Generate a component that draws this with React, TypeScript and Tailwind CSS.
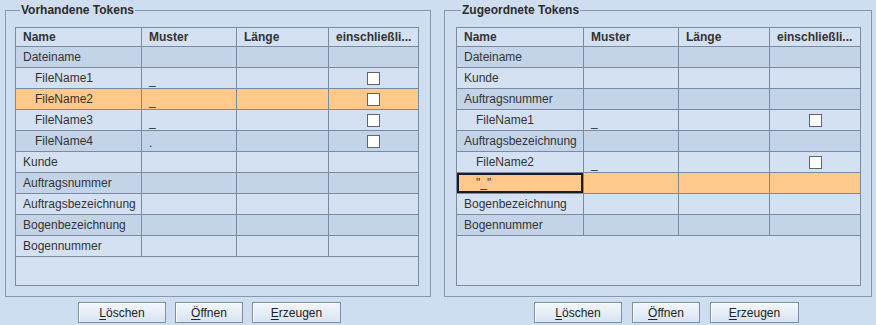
import React from "react";

type Row = {
  name: string;
  child?: boolean;
  muster?: string;
  check?: boolean;
  selected?: boolean;
  focus?: boolean;
};

const leftRows: Row[] = [
  { name: "Dateiname" },
  { name: "FileName1", child: true, muster: "_", check: true },
  { name: "FileName2", child: true, muster: "_", check: true, selected: true },
  { name: "FileName3", child: true, muster: "_", check: true },
  { name: "FileName4", child: true, muster: ".", check: true },
  { name: "Kunde" },
  { name: "Auftragsnummer" },
  { name: "Auftragsbezeichnung" },
  { name: "Bogenbezeichnung" },
  { name: "Bogennummer" },
];

const rightRows: Row[] = [
  { name: "Dateiname" },
  { name: "Kunde" },
  { name: "Auftragsnummer" },
  { name: "FileName1", child: true, muster: "_", check: true },
  { name: "Auftragsbezeichnung" },
  { name: "FileName2", child: true, muster: "_", check: true },
  { name: '"_"', child: true, selected: true, focus: true },
  { name: "Bogenbezeichnung" },
  { name: "Bogennummer" },
];

function Checkbox() {
  return <div className="w-[13px] h-[13px] bg-white border border-[#5b6573]" />;
}

function Table({ rows, widths }: { rows: Row[]; widths: number[] }) {
  const headers = ["Name", "Muster", "Länge", "einschließli..."];
  return (
    <div className="h-[259px] border border-[#7a8ba1] bg-[#d3e1f3] flex flex-col overflow-hidden">
      <div className="flex h-[19px] border-b border-[#7a8ba1] bg-[#d3e1f3]">
        {headers.map((h, i) => (
          <div
            key={h}
            style={{ width: widths[i] }}
            className={`shrink-0 pl-[7px] flex items-center font-bold text-[#333] whitespace-nowrap overflow-hidden ${
              i < 3 ? "border-r border-[#7a8ba1]" : ""
            }`}
          >
            {h}
          </div>
        ))}
      </div>
      {rows.map((r, idx) => {
        const bg = r.selected ? "bg-[#ffc98c]" : idx % 2 === 0 ? "bg-[#c3d3e8]" : "bg-[#d3e1f3]";
        return (
          <div key={idx} className={`flex h-[21px] border-b border-[#7a8ba1] ${bg}`}>
            <div
              style={{ width: widths[0] }}
              className={`shrink-0 flex items-center border-r border-[#7a8ba1] text-[#333] whitespace-nowrap overflow-hidden ${
                r.child ? "pl-[19px]" : "pl-[7px]"
              } ${r.focus ? "shadow-[inset_0_0_0_2px_#1c1c1c]" : ""}`}
            >
              {r.name}
            </div>
            <div
              style={{ width: widths[1] }}
              className="shrink-0 flex items-center pl-[7px] border-r border-[#7a8ba1] text-[#333] pt-[4px]"
            >
              {r.muster ?? ""}
            </div>
            <div style={{ width: widths[2] }} className="shrink-0 border-r border-[#7a8ba1]" />
            <div style={{ width: widths[3] }} className="shrink-0 flex items-center justify-center">
              {r.check ? <Checkbox /> : null}
            </div>
          </div>
        );
      })}
    </div>
  );
}

function Btn({ label, w }: { label: string; w: number }) {
  return (
    <button
      style={{ width: w }}
      className="h-[21px] border border-[#7d8ea5] bg-gradient-to-b from-[#f3f7fc] to-[#d8e3f1] text-[#222] text-[12px] leading-none flex items-center justify-center shadow-[inset_1px_1px_0_#ffffff]"
    >
      <span className="underline underline-offset-2">{label[0]}</span>
      {label.slice(1)}
    </button>
  );
}

function Panel({
  title,
  rows,
  widths,
  width,
  padLeft,
  btnStart,
  btnGap,
}: {
  title: string;
  rows: Row[];
  widths: number[];
  width: number;
  padLeft: string;
  btnStart: string;
  btnGap: string;
}) {
  return (
    <div className="flex flex-col" style={{ width }}>
      <fieldset className={`border border-[#8797ad] pt-[10px] pb-[10px] ${padLeft}`}>
        <legend className="ml-[5px] px-[1px] text-[12px] font-bold leading-[14px] text-[#2b2b2b]">
          {title}
        </legend>
        <div className="w-fit">
          <Table rows={rows} widths={widths} />
        </div>
      </fieldset>
      <div className={`flex mt-[5px] ${btnStart} ${btnGap}`}>
        <Btn label="Löschen" w={88} />
        <Btn label="Öffnen" w={68} />
        <Btn label="Erzeugen" w={89} />
      </div>
    </div>
  );
}

export default function App() {
  return (
    <div
      className="w-[876px] h-[325px] bg-[#cfddf0] overflow-hidden text-[12px] text-[#333] flex items-start pt-[3px]"
      style={{ fontFamily: '"Liberation Sans", Arial, sans-serif' }}
    >
      <div className="ml-[5px]">
        <Panel
          title="Vorhandene Tokens"
          rows={leftRows}
          widths={[126, 95, 92, 89]}
          width={426}
          padLeft="pl-[9px]"
          btnStart="ml-[73px]"
          btnGap="gap-[9px]"
        />
      </div>
      <div className="ml-[13px]">
        <Panel
          title="Zugeordnete Tokens"
          rows={rightRows}
          widths={[127, 95, 91, 90]}
          width={428}
          padLeft="pl-[11px]"
          btnStart="ml-[90px]"
          btnGap="gap-[10px]"
        />
      </div>
    </div>
  );
}
